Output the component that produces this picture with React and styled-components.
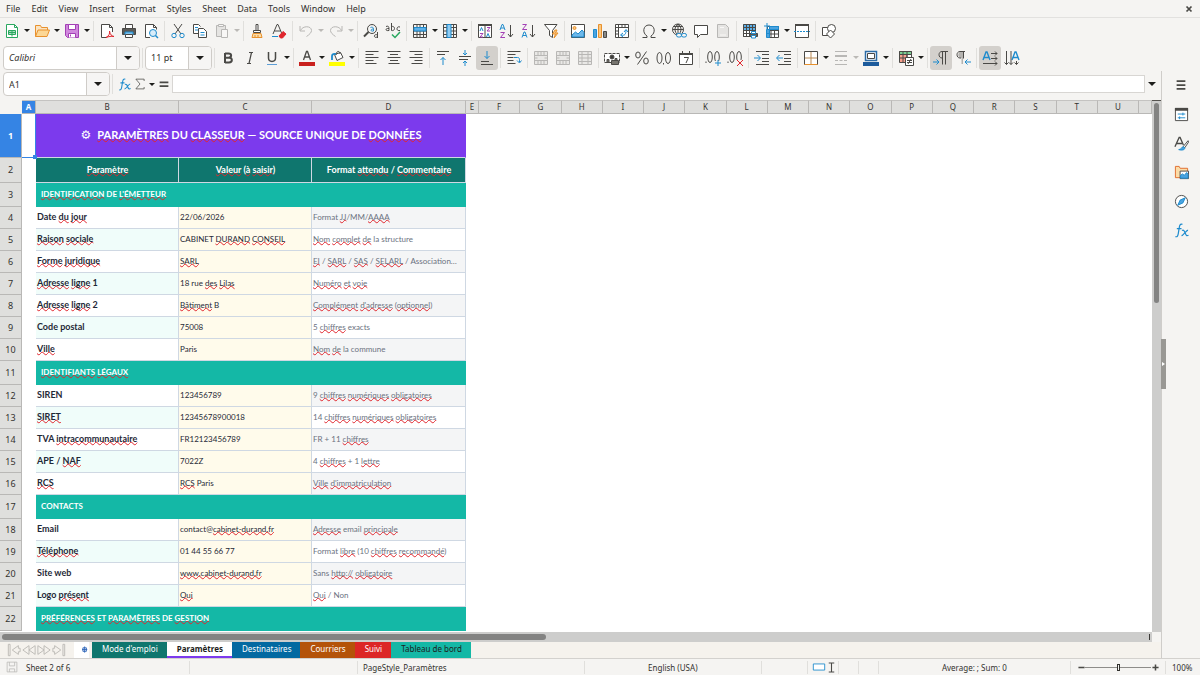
import React from 'react'
import styled, { createGlobalStyle } from 'styled-components'

const GlobalStyle = createGlobalStyle`
*{
  box-sizing: border-box;
}
body{
  margin: 0;
  background-color: #f5f4f2;
  color: #33322f;
  font-family: "Noto Sans", "Open Sans", sans-serif;
  font-size: 9px;
}
button, input{
  font: inherit;
  color: inherit;
  margin: 0;
  padding: 0;
  border: none;
  background: none;
}
`

const Window = styled.div`
height: 100vh;
display: flex;
flex-direction: column;
overflow: hidden;
`

const MenuBar = styled.nav`
height: 17px;
flex-shrink: 0;
display: flex;
align-items: center;
padding: 0px 6px;
gap: 11px;
`

const MenuItem = styled.button`
line-height: 16px;
`

const CloseButton = styled.button`
margin-left: auto;
width: 10px;
height: 16px;
display: flex;
align-items: center;
justify-content: center;
`

const Toolbar = styled.div`
height: ${props => props.$line ? 26 : 28}px;
flex-shrink: 0;
display: flex;
align-items: center;
padding-left: ${props => props.$pad || 0}px;
border-top: 1px solid ${props => props.$line ? "#e2e1df" : "transparent"};
`

const ToolButton = styled.button`
width: ${props => props.$width || 22}px;
height: 24px;
flex-shrink: 0;
display: flex;
align-items: center;
justify-content: center;
border-radius: 3px;
background-color: ${props => props.$active ? "#d3d0cc" : "transparent"};
`

const ArrowButton = styled.button`
width: ${props => props.$width || 8}px;
height: 22px;
flex-shrink: 0;
display: flex;
align-items: center;
justify-content: center;
`

const Triangle = styled.span`
width: 0;
height: 0;
border-left: ${props => props.$size || 3}px solid transparent;
border-right: ${props => props.$size || 3}px solid transparent;
border-top: ${props => props.$size || 3}px solid ${props => props.$off ? "#bbb9b6" : "#1d1d1b"};
`

const Separator = styled.span`
width: 1px;
height: 20px;
flex-shrink: 0;
margin: 0px 2px;
background-color: #e0dfdc;
`

const Combo = styled.div`
display: flex;
width: ${props => props.$width}px;
height: 24px;
flex-shrink: 0;
border: 1px solid #cfccc8;
border-radius: 4px;
overflow: hidden;
background-color: white;
`

const ComboInput = styled.input`
flex: 1;
min-width: 0;
padding-left: 5px;
outline: none;
font-style: ${props => props.$italic ? "italic" : "normal"};
`

const ComboButton = styled.button`
width: 23px;
display: flex;
align-items: center;
justify-content: center;
background-color: #f6f5f4;
border-left: 1px solid #cfccc8;
`

const Body = styled.div`
flex: 1;
min-height: 0;
display: flex;
position: relative;
`

const Main = styled.main`
flex: 1;
min-width: 0;
display: flex;
flex-direction: column;
`

const FormulaBar = styled.div`
height: 29px;
flex-shrink: 0;
display: flex;
align-items: center;
padding: 0px 2px 3px 3px;
`

const FormulaInput = styled.input`
flex: 1;
min-width: 0;
height: 18px;
margin-left: 1px;
background-color: white;
border: 1px solid #d8d6d3;
outline: none;
`

const SheetArea = styled.div`
flex: 1;
min-height: 0;
display: grid;
grid-template-columns: minmax(0, 1fr) 9px;
grid-template-rows: minmax(0, 1fr) 10px;
`

const SheetView = styled.div`
overflow: hidden;
background-color: white;
`

const Table = styled.table`
width: 100%;
table-layout: fixed;
border-collapse: separate;
border-spacing: 0;
`

const ColHead = styled.th`
height: 14px;
padding: 0;
line-height: 12px;
font-size: 8px;
font-weight: ${props => props.$selected ? 700 : 400};
color: ${props => props.$selected ? "white" : "#33322f"};
background-color: ${props => props.$selected ? "#3584e4" : "#dfdfdd"};
border-top: 1px solid #c4c3c1;
border-right: 1px solid #b9b8b6;
border-bottom: 1px solid #b9b8b6;
`

const Corner = styled.td`
padding: 0;
background-color: #f5f4f2;
`

const RowHead = styled.th`
padding: 0;
height: ${props => props.$height}px;
line-height: 12px;
font-size: 9px;
font-weight: ${props => props.$selected ? 700 : 400};
color: ${props => props.$selected ? "white" : "#33322f"};
background-color: ${props => props.$selected ? "#3584e4" : "#dfdfdd"};
border-right: 1px solid #b9b8b6;
border-bottom: 1px solid #b9b8b6;
`

const Cell = styled.td`
padding: 0;
position: relative;
`

const CursorCell = styled(Cell)`
border-bottom: 1px solid #3584e4;
border-right: 1px solid #3584e4;
`

const FillHandle = styled.span`
position: absolute;
right: -2px;
bottom: -2px;
width: 4px;
height: 4px;
background-color: #3584e4;
z-index: 1;
`

const DataCell = styled.td`
padding: 0px 0px 1px 1px;
font-family: Lato, "Open Sans", sans-serif;
line-height: 12px;
white-space: nowrap;
overflow: hidden;
border-right: 1px solid #cfd8e3;
border-bottom: 1px solid #cfd8e3;
`

const TitleCell = styled(DataCell)`
text-align: center;
font-size: 11px;
font-weight: 700;
color: white;
background-color: #7c3aed;
border-right-color: #7c3aed;
`

const Gear = styled.span`
font-family: "DejaVu Sans", sans-serif;
font-weight: 400;
font-size: 12px;
margin-right: 6px;
`

const HeadCell = styled(DataCell)`
padding-bottom: 0px;
text-align: center;
font-size: 9px;
font-weight: 700;
color: white;
background-color: #0f766e;
`

const SectionCell = styled(DataCell)`
padding-left: 5px;
font-size: 8px;
font-weight: 700;
color: white;
background-color: #14b8a6;
border-color: #14b8a6;
`

const LabelCell = styled(DataCell)`
font-size: 9px;
font-weight: 700;
color: #1f2937;
background-color: ${props => props.$odd ? "#f0fdfa" : "white"};
`

const ValueCell = styled(DataCell)`
font-size: 8px;
color: #1f2937;
background-color: #fffbeb;
`

const NoteCell = styled(DataCell)`
font-size: 8px;
color: #6b7280;
background-color: ${props => props.$odd ? "white" : "#f4f5f6"};
`

const Misspelled = styled.span`
text-decoration: underline wavy #e0262d 1px;
text-decoration-skip-ink: none;
text-underline-offset: -1px;
`

const VScroll = styled.div`
background-color: #cdcdcc;
padding: 2px;
border-top: 1px solid #55534f;
`

const VThumb = styled.div`
height: 38%;
border-radius: 3px;
background-color: #838382;
`

const HScroll = styled.div`
display: flex;
align-items: center;
justify-content: space-between;
background-color: #cdcdcc;
padding: 2px;
`

const HThumb = styled.div`
width: 47.4%;
height: 6px;
border-radius: 3px;
background-color: #838382;
`

const HEnd = styled.div`
width: 1px;
height: 6px;
background-color: #3b3a37;
`

const TabBar = styled.div`
height: 16px;
flex-shrink: 0;
display: flex;
align-items: stretch;
background-color: #f5f2ed;
`

const TabTools = styled.div`
width: 92px;
flex-shrink: 0;
display: flex;
align-items: center;
padding-left: 6px;
`

const TabTool = styled.button`
width: 15px;
height: 16px;
display: flex;
align-items: center;
justify-content: center;
`

const AddSheet = styled(TabTool)`
margin-left: 8px;
background-color: white;
`

const Tab = styled.button`
padding: 0px 9px 0px 10px;
font-size: 8px;
line-height: 14px;
font-weight: ${props => props.$active ? 700 : 400};
color: ${props => props.$dark ? "#1d1d1b" : "white"};
background-color: ${props => props.$color};
border-bottom: 2px solid ${props => props.$active ? "#7c3aed" : props.$color};
`

const Sidebar = styled.aside`
width: 39px;
flex-shrink: 0;
display: flex;
flex-direction: column;
align-items: center;
gap: 5px;
padding-top: 2px;
border-left: 1px solid #cfcdca;
`

const SidebarHandle = styled.button`
position: absolute;
right: 34px;
top: 268px;
width: 5px;
height: 50px;
display: flex;
align-items: center;
justify-content: center;
background-color: #999894;
`

const HandleArrow = styled.span`
border-top: 2px solid transparent;
border-bottom: 2px solid transparent;
border-left: 3px solid white;
`

const StatusBar = styled.footer`
height: 17px;
flex-shrink: 0;
display: flex;
align-items: center;
font-size: 8px;
border-top: 1px solid #d3d1ce;
`

const StatusItem = styled.div`
flex: ${props => props.$grow || "none"};
width: ${props => props.$width ? props.$width + "px" : "auto"};
height: 13px;
display: flex;
align-items: center;
gap: ${props => props.$gap || 0}px;
justify-content: ${props => props.$center ? "center" : "flex-start"};
padding-left: ${props => props.$pad || 0}px;
border-right: ${props => props.$last ? "none" : "1px solid #e0dfdc"};
`

const ZoomButton = styled.button`
width: 8px;
height: 13px;
display: flex;
align-items: center;
justify-content: center;
`

const ZoomSlider = styled.input`
width: 66px;
height: 12px;
appearance: none;
outline: none;
&::-webkit-slider-runnable-track{
  height: 1px;
  background-color: #8e8d8a;
}
&::-webkit-slider-thumb{
  appearance: none;
  width: 3px;
  height: 7px;
  margin-top: -3px;
  background-color: #f5f4f2;
  border: 1px solid #33322f;
}
`

const Svg = styled.svg`
display: block;
flex-shrink: 0;
fill: none;
stroke-width: 1;
stroke: #4a4946;
opacity: ${props => props.$off ? 0.35 : 1};
`

const B = "#1e8bcd"
const O = "#e8912d"
const P = "#a33fb5"
const R = "#e0262d"
const G = "#2aa860"

const grid = "M1.5 1.5h13v13h-13zM1.5 4.5h13M1.5 8h13M1.5 11.5h13M5 1.5v13M8 1.5v13M11.5 1.5v13"

const icons = {
  newDoc: <g stroke={G}><path d="M2.5 1.5h8l3 3v10h-11z" fill="#fff" /><path d="M10.5 1.5v3h3" /><path d="M4.5 7.5h7v4h-7zM4.5 9.5h7M8 7.5v6" fill="#a9dfbf" /></g>,
  open: <g stroke={O}><path d="M1.5 13.5v-11h5l1 2h6v3" fill="#fbe3c0" /><path d="M1.5 13.5l2.5-6.5h11.5l-2.5 6.5z" fill="#fcd795" /></g>,
  save: <g stroke={P}><path d="M1.5 1.5h13v13h-11l-2-2z" fill="#d088dd" /><path d="M4.5 1.5h7v5h-7zM4.5 14.5v-4h7v4" fill="#fff" /><path d="M6.5 11.5v2" /></g>,
  pdf: <g><path d="M13.5 9v-4.500l-3-3h-8v13h5" fill="#fff" /><path d="M10.500 1.500v3h3" /><path d="M7 14.500c3-1.500 4-4 3.500-6.500c.5 3.500 2 5 4.500 5.500c-3-.5-5 0-8 1z" stroke={R} /></g>,
  print: <g><path d="M4.500 5.500v-4h7v4" fill="#fff" /><path d="M1.500 5.500h13v6h-13z" fill="#5b5a57" /><path d="M4 9h8v3h-8z" fill="#7fc1ec" stroke={B} /><path d="M4.500 11.500h7v3h-7z" fill="#fff" /></g>,
  preview: <g><path d="M7 14.500h-4.500v-13h8l3 3v2" fill="#fff" /><path d="M10.500 1.500v3h3" /><circle cx="10" cy="10" r="3.500" stroke={B} fill="#d8edfa" /><path d="M12.500 12.500l2.500 2.500" stroke={B} strokeWidth="1.500" /></g>,
  cut: <g><path d="M4 1l7 10M12 1l-7 10" /><circle cx="4" cy="12.500" r="2.200" stroke={B} /><circle cx="12" cy="12.500" r="2.200" stroke={B} /></g>,
  copy: <g><path d="M6 10.500h-4.500v-9h5l2 2" fill="#fff" /><path d="M3 4.500h3M3 7h3" stroke={B} /><path d="M6.500 5.500h5l3 3v6h-8z" fill="#fff" /><path d="M8.500 9.500h4M8.500 12h4" stroke={B} /></g>,
  paste: <g><path d="M2.500 2.500h9v11h-9z" fill="#c9c8c5" /><path d="M4.500 1.500h5v2h-5z" fill="#fff" /><path d="M7.500 6.500h6v8h-6z" fill="#fff" /></g>,
  brush: <g><path d="M7 7v-5.500h2v5.500M4.500 7.500h7v2h-7z" fill="#fff" /><path d="M4 10.500h8l1 4h-10zM6 14v-2M9 14v-2" stroke={O} fill="#fbdca8" /></g>,
  clear: <g><path d="M2 11l4-9.500h1l4 9.500M3.500 8h6" /><path d="M8 13l4-4.500l3 2.500l-3.500 4h-2z" fill={R} stroke={R} /><path d="M1 13.500h6" stroke={B} /></g>,
  undo: <path d="M2 3v5h5M2.500 7.500c2-5 11-5 11 0c0 2-2 4-5 6" />,
  redo: <path d="M14 3v5h-5M13.500 7.500c-2-5-11-5-11 0c0 2 2 4 5 6" />,
  find: <g><circle cx="9" cy="6" r="4.500" /><path d="M5.500 9l-4.500 4.500" strokeWidth="2" /><path d="M7.500 4.500c3-1 3 .5 3 3.500c-3 .8-3.500-2 0-2" stroke={B} /><path d="M14.500 9v6M14.500 12c-3-1.500-4.500 2-1.500 2.500l1.500-1" /></g>,
  rowIns: <g><path d={grid} /><path d="M2 4.500h12v3.500h-12z" fill="#5eb1ea" stroke={B} /></g>,
  colIns: <g><path d={grid} /><path d="M5 1.500h4v13h-4z" fill="#8fcbf2" stroke={B} /></g>,
  sort: <g><path d="M1.500 1.500h13v13h-13zM8 1.500v13" fill="#fff" /><path d="M1 2h14" strokeWidth="2" /><path d="M3 8l1.500-3.500l1.500 3.500M9.500 14l1.500-3.500l1.500 3.500" stroke={B} /><path d="M3 10.500h3l-3 3.500h3M10 4.500h3l-3 3.500h3" stroke={P} /></g>,
  az: <g><path d="M1 7l2-5.500h1l2 5.500M2 5h3" stroke={B} /><path d="M1.500 9.500h4l-4 5h4.500" stroke={P} /><path d="M11.500 2v12M9 11l2.500 3l2.500-3" /></g>,
  za: <g><path d="M1.500 1.500h4l-4 5h4.500" stroke={P} /><path d="M1 14.500l2-5.500h1l2 5.500M2 12.500h3" stroke={B} /><path d="M11.500 2v12M9 11l2.500 3l2.500-3" /></g>,
  filter: <g><path d="M1.500 1.500h12.500l-4.500 6v7l-3-2v-5z" fill="#fff" /><path d="M12 7l-2.500 4h3l-1.500 4l4-5h-2.500l1.500-3z" fill="#fbc77f" stroke={O} /></g>,
  image: <g><path d="M1.500 1.500h13v13h-13z" fill="#fff" /><circle cx="4.500" cy="5" r="1.500" fill="#fbc77f" stroke={O} /><path d="M2 14v-2l3.500-3l2.500 2l4-4l2 2.500v4.500z" fill="#6db8ea" stroke={B} /></g>,
  chart: <g><path d="M1.500 6.500h3v8h-3z" fill="#4ba3df" stroke={B} /><path d="M6.500 1.500h3v13h-3z" fill="#fbc77f" stroke={O} /><path d="M11.500 8.500h3v6h-3z" fill="#8a8986" /></g>,
  pivot: <g><path d="M1.500 1.500h13v13h-13zM1.500 4.500h13M4.500 1.500v13M8 1.500v3M11 1.500v3M1.500 8h3M1.500 11h3" fill="#fff" /><path d="M7 12c4 1 5-1 5-5M10 9l2-2.500l2 2.500M9 10l-2.500 2l2.500 2" stroke={B} /></g>,
  omega: <path d="M1.500 14.500h4.500v-1.500c-5-3-4-11 2-11s7 8 2 11v1.500h4.500" />,
  link: <g><circle cx="7" cy="6.500" r="5.500" /><path d="M1.500 6.500h11M7 1v11M2.500 3.500h9M7 1c-4 3-4 8 0 11M7 1c4 3 4 8 0 11" /><path d="M6 10.500h9v4h-9z" fill="#f5f4f2" stroke="none" /><rect x="5.500" y="10.500" width="5" height="3.500" rx="1.700" stroke={B} /><rect x="10.500" y="10.500" width="5" height="3.500" rx="1.700" stroke={B} /></g>,
  comment: <path d="M1.500 2.500h13v9h-7l-3 3v-3h-3z" fill="#fff" />,
  headFoot: <g><path d="M2.500 1.500h8l3 3v10h-11z" fill="#c9c8c5" /><path d="M5 4.500h4M5 12h6" stroke="#fff" /></g>,
  printArea: <g><path d="M1.500 1.500h12v12h-12z" fill="#fff" /><path d="M1 1h13v6h-13z" fill="#5eb1ea" stroke="none" /><path d="M1.500 1.500h12v12h-12zM1.500 4.500h12M1.500 7.500h12M1.500 10.500h12M4.500 1.500v12M7.500 1.500v12M10.500 1.500v12" /><path d="M7.500 10.500h8v3h-8z" fill="#5b5a57" /><path d="M9.500 8.500h4v2h-4zM9.500 12.500h4v2.500h-4z" fill="#fff" stroke={B} /></g>,
  freeze: <g><path d="M3.500 3.500h11v11h-11zM3.500 7.500h11M3.500 11h11M7 3.500v11M10.500 3.500v11" fill="#fff" /><path d="M2.500 6.500h3v8h-3zM5.500 3.500h9v3h-9zM2.500 10.500h3" fill="#4ba3df" stroke={B} /><path d="M3 0v6M0 3h6" stroke={B} /></g>,
  split: <g><path d="M1.500 1.500h13v13h-13z" fill="#fff" /><path d="M1 2h14" strokeWidth="2" /><path d="M0 8.500h16" stroke={B} strokeDasharray="2 1" /></g>,
  shapes: <g><path d="M1.500 4.500h7v8h-7z" fill="#fff" /><circle cx="10.500" cy="5.500" r="4" fill="#fff" /><path d="M9.500 7l4 4l-4 4l-4-4z" fill="#fff" /></g>,
  bold: <path d="M5 3v10M5 3.500h3.500c3.500 0 3.500 4.200 0 4.200h-3.500h4c3.800 0 3.800 4.800 0 4.800h-4" strokeWidth="2" />,
  italic: <path d="M7 2.500h4M5 13.500h4M9.500 2.500l-2.500 11" strokeWidth="1.200" />,
  underline: <g><path d="M4.500 2v6c0 4.500 7 4.500 7 0v-6" strokeWidth="1.500" /><path d="M3 14.500h10" stroke="#5e9ed6" /></g>,
  fontColor: <g><path d="M4.500 10l3-8.500h1l3 8.500M5.500 7h5" strokeWidth="1.300" /><path d="M0 12h16v4h-16z" fill="#c9211e" stroke="none" /></g>,
  bgColor: <g><path d="M5.500 4.500l6-2l2.500 5l-6 3z" fill="#fff" /><path d="M7 5c0-4 4-5 4-1" /><path d="M3 10v-4c0-2 2-2.500 4-2" stroke={B} strokeWidth="1.800" /><path d="M0 12h16v4h-16z" fill="#ffff00" stroke="none" /></g>,
  left: <path d="M1.500 1.500h13M1.500 4.500h8M1.500 7.500h13M1.500 10.500h8M1.500 13.500h11" />,
  center: <path d="M1.500 1.500h13M4 4.500h8M1.500 7.500h13M4 10.500h8M2.500 13.500h11" />,
  right: <path d="M1.500 1.500h13M6.500 4.500h8M1.500 7.500h13M6.500 10.500h8M3.500 13.500h11" />,
  top: <g><path d="M2 1.500h12M2 4.500h8" /><path d="M8 15v-7.500M5.500 10l2.500-2.500l2.500 2.500" stroke={B} /></g>,
  middle: <g><path d="M2 6.500h12M2 9.500h9" /><path d="M8 0v5M6 3l2 2l2-2M8 16v-5M6 13l2-2l2 2" stroke={B} /></g>,
  bottom: <g><path d="M2 11.500h8M2 14.500h12" /><path d="M8 1v7.500M5.500 6l2.500 2.500l2.500-2.500" stroke={B} /></g>,
  wrap: <g><path d="M1.500 1.500h13M1.500 4.500h8M1.500 7.500h6M1.500 10.500h6M1.500 13.500h8" /><path d="M8 7.500h3.500c2 0 2 1 2 4.500M11 10.500l2.500 2.500l2-2.500" stroke={B} /></g>,
  merge: <path d="M1.500 1.500h13v13h-13zM1.500 5.500h13M1.500 10.500h13M5 1.500v4M8 1.500v4M11 1.500v4M5 10.500v4M8 10.500v4M11 10.500v4M1.500 8h3M11.500 8h3" fill="#d5d4d1" />,
  mergeV: <path d="M1.500 1.500h13v13h-13zM1.500 4.500h13M1.500 8h13M1.500 11.500h13M5 1.500v13M11 1.500v13" fill="#d5d4d1" />,
  currency: <g><path d="M.5 3.500h15v9h-15z" fill="#fff" strokeDasharray="3 1" /><circle cx="8" cy="7" r="2" fill="#3f3e3b" /><path d="M3 9.500h2v3h-2zM7.500 10.500h7v4h-7zM11 8.500h2v2h-2z" fill="#77756f" /></g>,
  percent: <g><ellipse cx="4" cy="5" rx="2.300" ry="3" /><ellipse cx="12" cy="11" rx="2.300" ry="3" /><path d="M12.500 1.500l-9 13" /></g>,
  number: <g><ellipse cx="3.500" cy="8" rx="2.500" ry="5.500" /><ellipse cx="12" cy="8" rx="2.500" ry="5.500" /><path d="M7.500 13v1.500" /></g>,
  date: <g><path d="M1.500 3.500h13v11h-13z" fill="#fff" /><path d="M1 4h14" strokeWidth="2" /><path d="M4.500 1v2M11.500 1v2M6 7.500h4.500l-2.500 5.500" /></g>,
  addDec: <g><ellipse cx="5" cy="7" rx="2.300" ry="5.500" /><ellipse cx="12" cy="7" rx="2.300" ry="5.500" /><path d="M1 11.500v1.500" /><path d="M9 11h7v5h-7z" fill="#f5f4f2" stroke="none" /><path d="M10 13h6M13 10v6" stroke={B} /></g>,
  delDec: <g><ellipse cx="5" cy="7" rx="2.300" ry="5.500" /><ellipse cx="12" cy="7" rx="2.300" ry="5.500" /><path d="M1 11.500v1.500" /><path d="M9 10h7v6h-7z" fill="#f5f4f2" stroke="none" /><path d="M10 10l6 6M16 10l-6 6" stroke={R} /></g>,
  indent: <g><path d="M2 1.500h13M8 4.500h7M8 8.500h7M8 11.500h7M2 14.500h13" /><path d="M0 8h6M3.500 5l3 3l-3 3" stroke={B} /></g>,
  outdent: <g><path d="M2 1.500h13M8 4.500h7M8 8.500h7M8 11.500h7M2 14.500h13" /><path d="M7 8h-6M3.500 5l-3 3l3 3" stroke={B} /></g>,
  border: <g><path d="M1.500 1.500h13v13h-13z" fill="#fff" /><path d="M1.500 14.500h13" stroke={O} /><path d="M8 2v12M2 8h12" stroke="#b98a55" /></g>,
  lineStyle: <path d="M2 1.500h12M2 5.500h12M2 6.500h12M2 10.500h3M6.500 10.500h3M11 10.500h3M2 14.500h12" />,
  borderColor: <g><path d="M2.500 1.500h11v9h-11z" fill="#fff" stroke="#2c6ba6" strokeWidth="1.500" /><path d="M4.500 3.500h7v5h-7z" /><path d="M0 12h16v4h-16z" fill="#1c5b9c" stroke="none" /></g>,
  conditional: <g><path d="M1.500 1.500h12v11h-12z" fill="#f7a08e" /><path d="M1.500 1.500h12v3h-12z" fill="#7bd094" /><path d="M9 4.500h4.500v8h-4.500z" fill="#fff" /><path d="M1.500 4.500h12M1.500 8h12M5 1.500v11M9 1.500v11" /><path d="M7.500 7.500h8v8h-8z" fill="#fff" /><path d="M9 10.500h5M9 12.500h5M13 9l-3 5" /></g>,
  ltr: <g><path d="M15 1.500h-6c-4 0-4 6.500 0 6.500M9.500 1.500v13M12.500 1.500v13" /><path d="M0 12h6M3.500 9.500l2.500 2.500l-2.500 2.500" stroke={B} /></g>,
  rtl: <g><path d="M5 2h3v12h-1.500v-6c-4-.5-4-5-1.500-6z" fill="#b5b3b0" stroke="none" /><path d="M10 1.500h-5c-4 0-4 6.500 0 6.500h1M8.500 1.500v7" /><path d="M16 12h-6M12.500 9.500l-2.500 2.500l2.500 2.500" stroke={B} /></g>,
  horiz: <g><path d="M1 10l3-8h1l3 8M2 7.500h5" stroke={B} strokeWidth="1.400" /><path d="M9 3.500h6M13 1.500l2 2l-2 2M9 8.500h6M13 6.500l2 2l-2 2M1 13.500h14M13 11.500l2 2l-2 2" /></g>,
  vert: <g><path d="M8 10l3-8h1l3 8M9 7.500h5" stroke={B} strokeWidth="1.400" /><path d="M2.500 1v13.500M.5 12.500l2 2l2-2M7 1v13.500M5 12.500l2 2l2-2M12.500 11v3.500M10.500 12.500l2 2l2-2" /></g>,
  fx: <g stroke={B} strokeWidth="1.300"><path d="M9 1.500c-2.500-1-3 1-3.500 4l-1 6c-.5 3-1.500 3.500-3 3M3 6h5" /><path d="M8.500 8c2-1 2.500.5 3.500 3s1.500 3 3.500 2M15 7.500c-2 0-5 6-7 6" /></g>,
  sigma: <path d="M13.500 4v-2.500h-11l5.500 6.500l-5.500 6.500h11v-2.500" />,
  equal: <path d="M1 5.500h14M1 11.500h14" strokeWidth="2.800" />,
  burger: <path d="M3 3.500h10M3 8h10M3 12.500h10" strokeWidth="2" />,
  props: <g><path d="M1.500 1.500h13v13h-13z" fill="#fff" /><path d="M1 2.500h14" strokeWidth="3" /><path d="M4 7.500h8M9.500 6v3M4 11.500h8M6 10v3" stroke={B} /></g>,
  stylesPane: <g><path d="M1 11.500l4.500-10h1l3.500 8M3 8h5.500" strokeWidth="1.400" /><path d="M15 5l-5 6l1.500 1.500l4-6z" fill="#fff" /><path d="M10 11.500c-2 0-2 3-5 3c3 1 7 .5 6.500-2z" fill="#4ba3df" stroke={B} /></g>,
  gallery: <g><path d="M1.500 13.500v-12h4l1 2h8v10z" fill="#fbdca8" stroke="#e06c2d" /><path d="M6.500 6.500h9v8h-9z" fill="#fff" /><path d="M7 14v-3l2-1.500l2 1.500l2.500-3l1.500 2v4z" fill="#4ba3df" stroke={B} /></g>,
  navigator: <g><circle cx="8" cy="8" r="6.500" fill="#fff" /><path d="M12 4l-2.500 5.500l-5.500 2.500l2.500-5.500z" fill="#4ba3df" stroke={B} /></g>,
  close: <path d="M3 3l10 10M13 3l-10 10" strokeWidth="3.500" />,
  first: <path d="M1.500 1.500h2v13h-2zM13 3l-7 5l7 5v-3h2v-4h-2z" />,
  prev: <path d="M8 3l-7 5l7 5zM15 3l-7 5l7 5z" />,
  next: <path d="M1 3l7 5l-7 5zM8 3l7 5l-7 5z" />,
  last: <path d="M12.500 1.500h2v13h-2zM3 3l7 5l-7 5v-3h-2v-4h2z" />,
  plusDoc: <path d="M9 5.500h4v4h-4zM11 4v7M8 7.500h6" stroke="#2a62b8" />,
  statusSave: <path d="M1.500 1.500h13v13h-13zM4.500 1.500v5h7v-5M4.500 14.500v-4h7v4" />,
  selectMode: <path d="M1.500 4.500h13v7h-13z" stroke={B} fill="#fff" />,
  ibeam: <path d="M4 1.500h8M4 14.500h8M8 1.500v13" strokeWidth="1.600" />,
  minus: <path d="M1 8h14" strokeWidth="3.500" />,
  plus: <path d="M1 8h14M8 1v14" strokeWidth="3.500" />,
}

const Icon = ({ name, size = 16, off }) => (
  <Svg width={size} height={size} viewBox="0 0 16 16" $off={off} aria-hidden="true">
    {name === "spell" ? (
      <g>
        <path d="M1 3.500c3-1 3 .5 3 4c-4 .8-4-2.500 0-2M6.500 0v7.500c4 1 4-5 0-4M15 4c-3.500-1.500-4.500 4.500 0 3.500" />
        <path d="M7 11.500l3 3l5-5.500" stroke={G} strokeWidth="1.500" />
      </g>
    ) : icons[name]}
  </Svg>
)

// "|" is a separator, a "+" suffix adds a drop-down arrow, "-" greys the icon, "*" is pressed
const standardTools = [
  "newDoc+", "open+", "save+", "|", "pdf", "print", "preview", "|", "cut", "copy", "paste-+", "|",
  "brush", "clear", "|", "undo-+", "redo-+", "|", "find", "spell", "|", "rowIns+", "colIns+", "|",
  "sort", "az", "za", "filter", "|", "image", "chart", "pivot", "|", "omega+", "link", "comment",
  "headFoot-", "|", "printArea", "freeze+", "split", "|", "shapes",
]

const formatTools = [
  "|", "bold", "italic", "underline+", "|", "fontColor+", "bgColor+", "|", "left", "center", "right", "|",
  "top", "middle", "bottom*", "|", "wrap", "|", "merge-", "merge-", "mergeV-", "|", "currency+",
  "percent", "number", "date", "|", "addDec", "delDec", "|", "indent", "outdent", "|", "border+",
  "lineStyle-+", "borderColor+", "|", "conditional+", "|", "ltr*", "rtl", "|", "horiz*", "vert",
]

const Tools = ({ items }) => items.map((item, i) => {
  if (item === "|") return <Separator key={i} />
  const name = item.replace(/[-+*]/g, "")
  const off = item.includes("-")
  return (
    <React.Fragment key={i}>
      <ToolButton $active={item.includes("*")} aria-label={name}>
        <Icon name={name} off={off} />
      </ToolButton>
      {item.includes("+") && (
        <ArrowButton aria-label={name + " options"}><Triangle $off={off} /></ArrowButton>
      )}
    </React.Fragment>
  )
})

const menus = ["File", "Edit", "View", "Insert", "Format", "Styles", "Sheet", "Data", "Tools", "Window", "Help"]
const letters = "FGHIJKLMNOPQRSTU".split("")

// words between underscores are flagged by the spell checker
const rows = [
  ["_IDENTIFICATION_ DE _L'ÉMETTEUR_"],
  ["Date _du_ _jour_", "22/06/2026", "Format _JJ_/MM/_AAAA_"],
  ["_Raison_ _sociale_", "CABINET _DURAND_ _CONSEIL_", "_Nom_ _complet_ _de_ la structure"],
  ["_Forme_ _juridique_", "_SARL_", "_EI_ / _SARL_ / _SAS_ / _SELARL_ / Association…"],
  ["_Adresse_ _ligne_ 1", "18 rue _des_ _Lilas_", "_Numéro_ _et_ _voie_"],
  ["_Adresse_ _ligne_ 2", "_Bâtiment_ B", "_Complément_ _d'adresse_ (_optionnel_)"],
  ["Code postal", "75008", "5 _chiffres_ exacts"],
  ["_Ville_", "Paris", "_Nom_ _de_ la commune"],
  ["_IDENTIFIANTS_ _LÉGAUX_"],
  ["SIREN", "123456789", "9 _chiffres_ _numériques_ _obligatoires_"],
  ["_SIRET_", "12345678900018", "14 _chiffres_ _numériques_ _obligatoires_"],
  ["TVA _intracommunautaire_", "FR12123456789", "FR + 11 _chiffres_"],
  ["APE / _NAF_", "7022Z", "4 _chiffres_ + 1 _lettre_"],
  ["_RCS_", "_RCS_ Paris", "_Ville_ _d'immatriculation_"],
  ["CONTACTS"],
  ["Email", "contact@_cabinet-durand.fr_", "_Adresse_ email _principale_"],
  ["_Téléphone_", "01 44 55 66 77", "Format _libre_ (10 _chiffres_ _recommandé_)"],
  ["Site web", "_www.cabinet-durand.fr_", "Sans _http://_ _obligatoire_"],
  ["Logo _présent_", "_Oui_", "_Oui_ / Non"],
  ["_PRÉFÉRENCES_ ET _PARAMÈTRES_ DE _GESTION_"],
]

const Spell = ({ text }) => text.split("_").map((part, i) =>
  i % 2 ? <Misspelled key={i}>{part}</Misspelled> : part
)

const Sheet = () => (
  <Table>
    <colgroup>
      {[22, 14, 143, 133, 154, 13].map((w, i) => <col key={i} width={w} />)}
      {letters.map(l => <col key={l} />)}
      <col width={13} />
    </colgroup>
    <thead>
      <tr>
        <Corner />
        <ColHead scope="col" $selected>A</ColHead>
        {["B", "C", "D", "E", ...letters].map(l => <ColHead scope="col" key={l}>{l}</ColHead>)}
        <ColHead />
      </tr>
    </thead>
    <tbody>
      <tr>
        <RowHead scope="row" $height={44} $selected>1</RowHead>
        <CursorCell><FillHandle /></CursorCell>
        <TitleCell colSpan={3}>
          <Gear>⚙</Gear><Spell text="_PARAMÈTRES_ DU _CLASSEUR_ — SOURCE UNIQUE DE _DONNÉES_" />
        </TitleCell>
        <Cell colSpan={18} />
      </tr>
      <tr>
        <RowHead scope="row" $height={25}>2</RowHead>
        <Cell />
        <HeadCell><Spell text="_Paramètre_" /></HeadCell>
        <HeadCell><Spell text="_Valeur_ (_à_ _saisir_)" /></HeadCell>
        <HeadCell><Spell text="Format _attendu_ / _Commentaire_" /></HeadCell>
        <Cell colSpan={18} />
      </tr>
      {rows.map(([label, value, note], i) => {
        const n = i + 3
        return (
          <tr key={n}>
            <RowHead scope="row" $height={value ? 22 : 24}>{n}</RowHead>
            <Cell />
            {value ? (
              <>
                <LabelCell $odd={n % 2 === 1}><Spell text={label} /></LabelCell>
                <ValueCell><Spell text={value} /></ValueCell>
                <NoteCell $odd={n % 2 === 1}><Spell text={note} /></NoteCell>
              </>
            ) : <SectionCell colSpan={3}><Spell text={label} /></SectionCell>}
            <Cell colSpan={18} />
          </tr>
        )
      })}
    </tbody>
  </Table>
)

const tabs = [
  ["Mode d'emploi", "#0f766e"],
  ["Paramètres", "white"],
  ["Destinataires", "#0369a1"],
  ["Courriers", "#b45309"],
  ["Suivi", "#dc2626"],
  ["Tableau de bord", "#14b8a6"],
]

const App = () => {
  return (
    <Window>
      <GlobalStyle />
      <MenuBar>
        {menus.map(m => <MenuItem key={m}>{m}</MenuItem>)}
        <CloseButton aria-label="Close"><Icon name="close" size={8} /></CloseButton>
      </MenuBar>
      <Toolbar $pad={1} $line><Tools items={standardTools} /></Toolbar>
      <Toolbar $pad={3}>
        <Combo $width={137}>
          <ComboInput aria-label="Font name" defaultValue="Calibri" $italic />
          <ComboButton aria-label="Font list"><Triangle $size={4} /></ComboButton>
        </Combo>
        <Separator />
        <Combo $width={67}>
          <ComboInput aria-label="Font size" defaultValue="11 pt" />
          <ComboButton aria-label="Size list"><Triangle $size={4} /></ComboButton>
        </Combo>
        <Tools items={formatTools} />
      </Toolbar>
      <Body>
        <Main>
          <FormulaBar>
            <Combo $width={107}>
              <ComboInput aria-label="Name box" defaultValue="A1" />
              <ComboButton aria-label="Names"><Triangle $size={4} /></ComboButton>
            </Combo>
            <Separator />
            <ToolButton $width={18} aria-label="Function wizard"><Icon name="fx" size={13} /></ToolButton>
            <ArrowButton $width={14} aria-label="Sum"><Icon name="sigma" size={12} /></ArrowButton>
            <ArrowButton $width={10} aria-label="Sum options"><Triangle /></ArrowButton>
            <ArrowButton $width={14} aria-label="Formula"><Icon name="equal" size={10} /></ArrowButton>
            <FormulaInput aria-label="Formula input" />
            <ArrowButton $width={14} aria-label="Expand formula bar"><Triangle $size={4} /></ArrowButton>
          </FormulaBar>
          <SheetArea>
            <SheetView><Sheet /></SheetView>
            <VScroll><VThumb /></VScroll>
            <HScroll><HThumb /><HEnd /></HScroll>
          </SheetArea>
          <TabBar>
            <TabTools>
              {["first", "prev", "next", "last"].map(n => (
                <TabTool key={n} aria-label={n}><Icon name={n} size={14} off /></TabTool>
              ))}
              <AddSheet aria-label="Add sheet"><Icon name="plusDoc" size={14} /></AddSheet>
            </TabTools>
            {tabs.map(([name, color], i) => (
              <Tab key={name} $color={color} $active={i === 1} $dark={i === 1 || i === 5}>{name}</Tab>
            ))}
          </TabBar>
        </Main>
        <Sidebar>
          {["burger", "props", "stylesPane", "gallery", "navigator", "fx"].map(n => (
            <ToolButton key={n} aria-label={n}><Icon name={n} size={n === "burger" ? 14 : 15} /></ToolButton>
          ))}
        </Sidebar>
        <SidebarHandle aria-label="Collapse sidebar"><HandleArrow /></SidebarHandle>
      </Body>
      <StatusBar>
        <StatusItem $width={190} $pad={6} $gap={8}><Icon name="statusSave" size={12} off /><span>Sheet 2 of 6</span></StatusItem>
        <StatusItem $width={168} />
        <StatusItem $grow={224} $pad={5}>PageStyle_Paramètres</StatusItem>
        <StatusItem $grow={178} $center>English (USA)</StatusItem>
        <StatusItem $width={46} />
        <StatusItem $width={31} $pad={4} $center><Icon name="selectMode" size={14} /><Icon name="ibeam" size={11} /></StatusItem>
        <StatusItem $width={20} />
        <StatusItem $width={20} />
        <StatusItem $grow={194} $center>Average: ; Sum: 0</StatusItem>
        <StatusItem $width={95} $center>
          <ZoomButton aria-label="Zoom out"><Icon name="minus" size={7} /></ZoomButton>
          <ZoomSlider type="range" aria-label="Zoom" min="0" max="200" defaultValue="100" />
          <ZoomButton aria-label="Zoom in"><Icon name="plus" size={7} /></ZoomButton>
        </StatusItem>
        <StatusItem $width={34} $pad={6} $last>100%</StatusItem>
      </StatusBar>
    </Window>
  )
}

export default App
